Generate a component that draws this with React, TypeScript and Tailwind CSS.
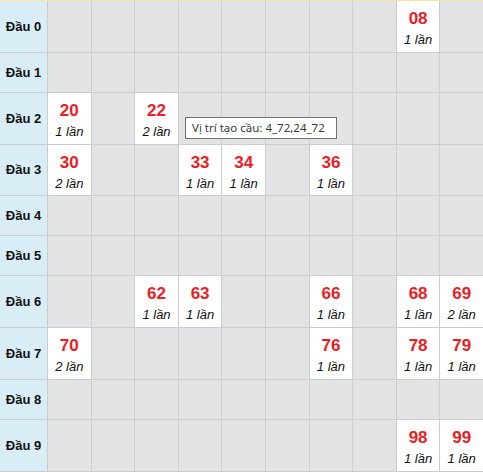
import { Fragment } from 'react';

const hits: Record<number, Record<number, number>> = {
  0: { 8: 1 },
  2: { 0: 1, 2: 2 },
  3: { 0: 2, 3: 1, 4: 1, 6: 1 },
  6: { 2: 1, 3: 1, 6: 1, 8: 1, 9: 2 },
  7: { 0: 2, 6: 1, 8: 1, 9: 1 },
  9: { 8: 1, 9: 1 },
};

const heads = [0, 1, 2, 3, 4, 5, 6, 7, 8, 9];

const App = () => {
  return (
    <div className="relative w-[483px] h-[472px] overflow-hidden bg-white [font-family:'Liberation_Sans',Arial,sans-serif]">
      <div className="border-t border-[#f6e3a2] bg-[#cdcdcd] pb-px grid grid-cols-[47px_repeat(10,1fr)] grid-rows-[51px_39px_51px_50px_39px_39px_51px_51px_39px_51px] gap-px">
        {heads.map((d) => (
          <Fragment key={d}>
            <div className="bg-[#d9edf7] flex items-center justify-center text-[13px] font-bold text-[#111]">
              Đầu {d}
            </div>
            {heads.map((t) => {
              const n = hits[d]?.[t];
              if (!n) return <div key={t} className="bg-[#e2e3e5]" />;
              return (
                <div key={t} className="bg-white flex flex-col items-center pt-[8px]">
                  <span className="text-[17px] leading-[20px] font-bold text-[#ed1c24]">
                    {d}
                    {t}
                  </span>
                  <span className="text-[13px] leading-[22px] italic text-[#111]">{n} lần</span>
                </div>
              );
            })}
          </Fragment>
        ))}
      </div>

      {/* tooltip */}
      <div className="absolute left-[185px] top-[117px] w-[152px] h-[22px] border border-[#707070] bg-white px-[6px] flex items-center text-[11.5px] text-[#3a3a3a] [font-family:'Noto_Sans',sans-serif] whitespace-nowrap">
        Vị trí tạo cầu: 4_72,24_72
      </div>
    </div>
  );
};

export default App;
